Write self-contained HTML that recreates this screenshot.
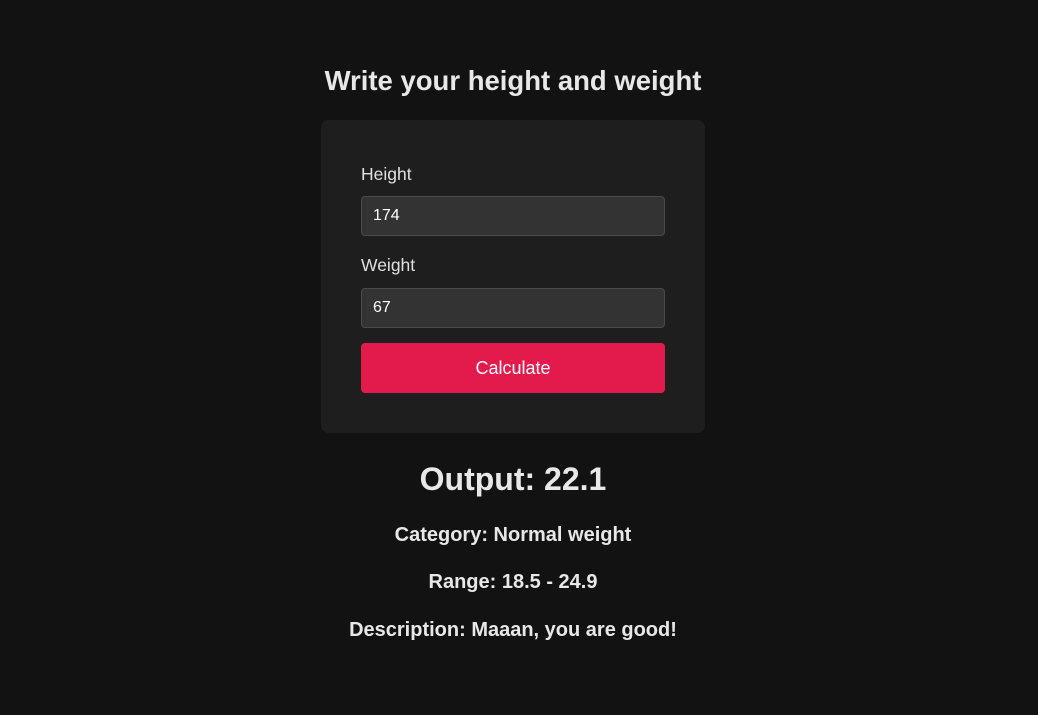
<!DOCTYPE html>
<html><head><style>
body{margin:0;background:#121212;font-family:"Liberation Sans",sans-serif;color:#e8e8e8;width:1038px;height:715px;overflow:hidden;position:relative}
.a{position:absolute;left:0;width:1026px;text-align:center;font-weight:bold;margin:0}
.card{position:absolute;left:321px;top:120px;width:384px;height:313px;background:#1e1e1e;border-radius:8px}
.lbl{position:absolute;left:40px;font-size:17.5px;color:#e0e0e0}
.inp{position:absolute;left:40px;height:38px;background:#333;border:1px solid #4a4a4a;border-radius:4px;color:#fff;font-size:16px;line-height:38px;box-sizing:content-box;padding-left:11px;width:291px}
.btn{position:absolute;left:40px;top:223px;width:304px;height:50px;background:#e31a4c;border-radius:4px;color:#fff;font-size:18px;text-align:center;line-height:50px}
</style></head><body>
<div class="a" style="top:65px;font-size:27.5px">Write your height and weight</div>
<div class="card">
<div class="lbl" style="top:44px">Height</div>
<div class="inp" style="top:76px">174</div>
<div class="lbl" style="top:135px">Weight</div>
<div class="inp" style="top:168px">67</div>
<div class="btn">Calculate</div>
</div>
<div class="a" style="top:461px;font-size:32px">Output: 22.1</div>
<div class="a" style="top:524px;font-size:20px">Category: Normal weight</div>
<div class="a" style="top:571px;font-size:20px">Range: 18.5 - 24.9</div>
<div class="a" style="top:619px;font-size:20px">Description: Maaan, you are good!</div>
</body></html>
